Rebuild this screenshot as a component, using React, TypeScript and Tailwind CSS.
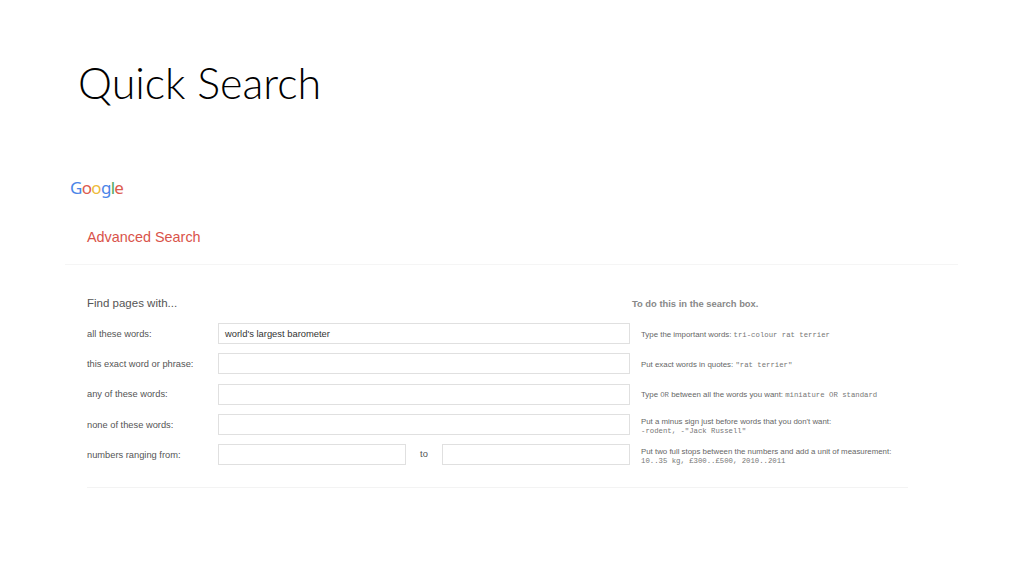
import React from "react";

const sans = "font-['Liberation_Sans',Arial,sans-serif]";
const mono = "font-['Liberation_Mono','DejaVu_Sans_Mono',monospace]";

function Input({ value = "", className = "" }: { value?: string; className?: string }) {
  return (
    <div className={`h-[21px] border border-[#e0e0e0] bg-white pl-[6px] text-[9.4px] leading-[19px] text-[#333] ${className}`}>
      {value}
    </div>
  );
}

function Row({ label, children, hint, two = false }: { label: string; children: React.ReactNode; hint: React.ReactNode; two?: boolean }) {
  return (
    <div className="flex h-[21px] items-center">
      <div className="mt-[2px] w-[131px] shrink-0 text-[9.3px] text-[#555]">{label}</div>
      <div className="flex w-[412px] shrink-0 items-center">{children}</div>
      <div className={`ml-[11px] text-[7.87px] leading-[9px] text-[#666] ${two ? "mt-[4px]" : "mt-[2px]"}`}>{hint}</div>
    </div>
  );
}

const M = ({ children }: { children: React.ReactNode }) => (
  <span className={`${mono} text-[7.3px] text-[#777]`}>{children}</span>
);

export default function App() {
  return (
    <div className={`flex h-[576px] w-[1024px] flex-col overflow-hidden bg-white ${sans}`}>
      <h1 className="pl-[78px] pt-[55px] font-['Lato',sans-serif] text-[43px] font-light leading-[56px] text-black">
        Quick Search
      </h1>
      <div className="mt-[65px] pl-[70px] font-['Noto_Sans',sans-serif] text-[17px] leading-[24px] tracking-[-0.7px]">
        <span className="text-[#4a85e8]">G</span>
        <span className="text-[#dc5b4e]">o</span>
        <span className="text-[#eebb3a]">o</span>
        <span className="text-[#4a85e8]">g</span>
        <span className="text-[#4da862]">l</span>
        <span className="text-[#dc5b4e]">e</span>
      </div>
      <div className="mt-[27px] pl-[87px] text-[14.4px] leading-[20px] text-[#d9534a]">Advanced Search</div>
      <div className="ml-[65px] mt-[17px] h-px w-[893px] bg-[#f5f5f5]" />
      <div className="mt-[30px] flex items-center pl-[87px]">
        <div className="w-[545px] text-[11.5px] leading-[16px] text-[#555]">Find pages with...</div>
        <div className="mt-[2px] text-[9.4px] font-bold text-[#888]">To do this in the search box.</div>
      </div>
      <div className="mt-[12px] flex flex-col gap-[9.3px] pl-[87px]">
        <Row label="all these words:" hint={<>Type the important words: <M>tri-colour rat terrier</M></>}>
          <Input value="world's largest barometer" className="w-full" />
        </Row>
        <Row label="this exact word or phrase:" hint={<>Put exact words in quotes: <M>"rat terrier"</M></>}>
          <Input className="w-full" />
        </Row>
        <Row label="any of these words:" hint={<>Type <M>OR</M> between all the words you want: <M>miniature OR standard</M></>}>
          <Input className="w-full" />
        </Row>
        <Row
          two
          label="none of these words:"
          hint={<>Put a minus sign just before words that you don't want:<br /><M>-rodent, -"Jack Russell"</M></>}
        >
          <Input className="w-full" />
        </Row>
        <Row
          two
          label="numbers ranging from:"
          hint={<>Put two full stops between the numbers and add a unit of measurement:<br /><M>10..35 kg, £300..£500, 2010..2011</M></>}
        >
          <Input className="w-[188px]" />
          <div className="w-[36px] text-center text-[9.3px] text-[#555]">to</div>
          <Input className="w-[188px]" />
        </Row>
      </div>
      <div className="ml-[87px] mt-[22px] h-px w-[821px] bg-[#f3f3f3]" />
    </div>
  );
}
